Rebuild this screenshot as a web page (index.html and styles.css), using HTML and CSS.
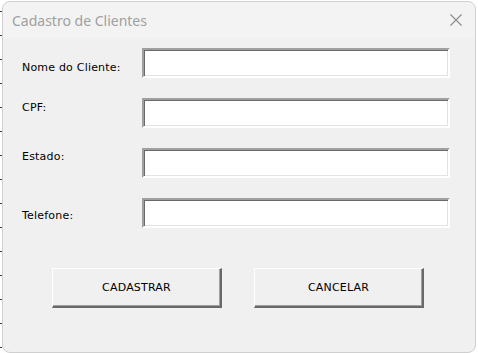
FILE: index.html
```html
<!DOCTYPE html>
<html lang="pt-BR">
<head>
  <meta charset="UTF-8">
  <title>Cadastro de Clientes</title>
  <link rel="stylesheet" href="styles.css">
</head>
<body>
  <div class="window">
    <div class="titlebar">
      <span class="title">Cadastro de Clientes</span>
      <svg class="close" width="12" height="12" viewBox="0 0 12 12">
        <path d="M0.5 0.5 L11.5 11.5 M11.5 0.5 L0.5 11.5" stroke="#8a8a8a" stroke-width="1.1" fill="none"/>
      </svg>
    </div>

    <form class="form">
      <div class="row">
        <label class="label nome">Nome do Cliente:</label>
        <input class="field" type="text">
      </div>
      <div class="row">
        <label class="label cpf">CPF:</label>
        <input class="field" type="text">
      </div>
      <div class="row">
        <label class="label estado">Estado:</label>
        <input class="field" type="text">
      </div>
      <div class="row">
        <label class="label telefone">Telefone:</label>
        <input class="field" type="text">
      </div>

      <div class="buttons">
        <button type="button" class="btn">CADASTRAR</button>
        <button type="button" class="btn">CANCELAR</button>
      </div>
    </form>
  </div>
</body>
</html>
```

FILE: styles.css
```css
html, body {
  margin: 0;
  padding: 0;
  height: 100%;
  overflow: hidden;
}
body {
  background-color: #ffffff;
  /* linhas da planilha por trás da janela */
  background-image: repeating-linear-gradient(to bottom, transparent 0, transparent 11px, #3a3a3a 11px, #3a3a3a 12px, transparent 12px, transparent 24px);
  background-size: 2px 100%;
  background-repeat: no-repeat;
  padding: 1px 0 0 2px;
  box-sizing: border-box;
}
.window {
  width: 474px;
  height: 352px;
  box-sizing: border-box;
  background-color: #f0f0f0;
  border: 1px solid #cfcfcf;
  border-radius: 8px;
  font-family: Tahoma, "DejaVu Sans", sans-serif;
  font-size: 11px;
  color: #000;
}
.titlebar {
  height: 36px;
  display: flex;
  align-items: center;
  justify-content: space-between;
  padding: 0 9px 0 9px;
  background-color: #f3f3f3;
  border-radius: 8px 8px 0 0;
}
.title {
  font-family: "Noto Sans", "Open Sans", sans-serif;
  font-size: 14px;
  color: #a0a0a0;
  padding-top: 1px;
}
.close {
  margin-right: 4px;
}
.form {
  padding: 10px 0 0 19px;
}
.row {
  display: flex;
  align-items: flex-start;
  height: 50px;
}
.label {
  width: 120px;
  letter-spacing: 0.2px;
}
.nome { padding-top: 13px; }
.cpf { padding-top: 3px; }
.estado { padding-top: 2px; }
.telefone { padding-top: 11px; }
.field {
  width: 308px;
  height: 30px;
  box-sizing: border-box;
  margin: 0;
  padding: 0 4px;
  background-color: #ffffff;
  border-style: solid;
  border-width: 2px;
  border-color: #a0a0a0 #ffffff #ffffff #a0a0a0;
  box-shadow: inset 1px 1px 0 #696969, inset -1px -1px 0 #e3e3e3;
  outline: none;
}
.buttons {
  display: flex;
  gap: 32px;
  padding: 20px 0 0 30px;
}
.btn {
  width: 170px;
  height: 40px;
  background-color: #f0f0f0;
  font-family: Tahoma, "DejaVu Sans", sans-serif;
  font-size: 11px;
  letter-spacing: 0.2px;
  color: #000;
  border-style: solid;
  border-width: 1px 2px 2px 1px;
  border-color: #ffffff #696969 #696969 #ffffff;
  box-shadow: inset -1px -1px 0 #a0a0a0;
  padding: 0;
  cursor: pointer;
}
```
